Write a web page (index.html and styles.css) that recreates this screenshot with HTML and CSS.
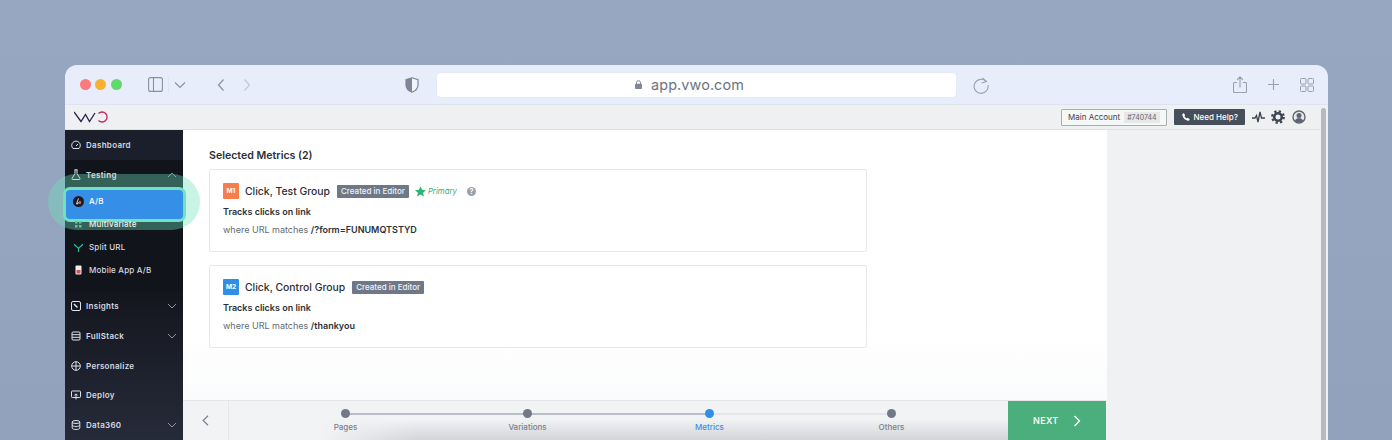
FILE: index.html
```html
<!DOCTYPE html>
<html lang="en">
<head>
<meta charset="utf-8">
<title>VWO metrics</title>
<link rel="stylesheet" href="styles.css">
</head>
<body>
<div class="window">
  <header class="toolbar">
    <div class="lights"><i class="light red"></i><i class="light yellow"></i><i class="light green"></i></div>
    <svg class="tb sidebar-ic" width="15" height="15" viewBox="0 0 15 15" fill="none" stroke="#8a919e" stroke-width="1.1"><rect x=".6" y=".6" width="13.800" height="13.800" rx="2"/><path d="M5.500.6v13.800"/></svg>
    <i class="tb-div"></i>
    <svg class="tb chev-ic" width="12" height="8" viewBox="0 0 12 8" fill="none" stroke="#8a919e" stroke-width="1.1"><path d="M1 1.500 6 6.500l5-5"/></svg>
    <svg class="tb back-ic" width="8" height="12" viewBox="0 0 8 12" fill="none" stroke="#8a919e" stroke-width="1.200"><path d="M6.500.5 1.500 6l5 5.500"/></svg>
    <svg class="tb fwd-ic" width="8" height="12" viewBox="0 0 8 12" fill="none" stroke="#c2c8d4" stroke-width="1.200"><path d="M1.500.5l5 5.500-5 5.500"/></svg>
    <svg class="tb shield-ic" width="14" height="16" viewBox="0 0 14 16"><path d="M7 .8 13 2.600V8c0 3.500-2.500 5.800-6 7.200C3.500 13.800 1 11.500 1 8V2.600z" fill="#f1f4fb" stroke="#7f8794" stroke-width="1.200"/><path d="M7 .8 1 2.600V8c0 3.500 2.500 5.800 6 7.200z" fill="#7f8794"/></svg>
    <div class="address">
      <svg width="7" height="9" viewBox="0 0 7 9"><path d="M1.500 4V2.700a2 2 0 0 1 4 0V4" fill="none" stroke="#7f8794" stroke-width="1"/><rect y="3.700" width="7" height="5.300" rx="1" fill="#7f8794"/></svg>
      <span class="url">app.vwo.com</span>
    </div>
    <svg class="tb reload-ic" width="18" height="18" viewBox="0 0 18 18" fill="none" stroke="#9aa1ad" stroke-width="1.100"><path d="M14.300 5.600A7 7 0 1 0 16 9"/><path d="M10.500 1.800l4 3.800-4.800 1.400"/></svg>
    <svg class="tb share-ic" width="14" height="17" viewBox="0 0 14 17" fill="none" stroke="#9aa1ad" stroke-width="1.100"><path d="M4 6.500H1.500a1 1 0 0 0-1 1V15.500a1 1 0 0 0 1 1h11a1 1 0 0 0 1-1V7.500a1 1 0 0 0-1-1H10M7 11.500V1M4 3.800 7 .8l3 3"/></svg>
    <svg class="tb plus-ic" width="11" height="11" viewBox="0 0 11 11" fill="none" stroke="#9aa1ad" stroke-width="1.100"><path d="M5.500 0v11M0 5.500h11"/></svg>
    <svg class="tb tabs-ic" width="14" height="14" viewBox="0 0 14 14" fill="none" stroke="#9aa1ad" stroke-width="1"><rect x=".5" y=".5" width="5.500" height="5.500" rx="1"/><rect x="8" y=".5" width="5.500" height="5.500" rx="1"/><rect x=".5" y="8" width="5.500" height="5.500" rx="1"/><rect x="8" y="8" width="5.500" height="5.500" rx="1"/></svg>
  </header>

  <div class="appbar">
    <svg class="logo" width="34" height="12" viewBox="0 0 34 12" fill="none" stroke-width="1.300"><path d="M0 1 7 10.500l4.500-7 4 7L21 2" stroke="#25204f"/><path d="M24.500 2.500A5 5 0 1 1 24.500 9.500" stroke="#c8245f"/></svg>
    <div class="account"><span>Main Account</span><span class="acc-id">#740744</span></div>
    <div class="help">
      <svg width="8" height="8" viewBox="0 0 8 8"><path d="M1.800.3 3.200 2.300 2.400 3.300c.5 1 1.300 1.800 2.300 2.300l1-.8L7.700 6.200C7.400 7.300 6.700 7.800 6 7.700 3 7.300.7 5 .3 2 .2 1.300.7.600 1.800.3z" fill="#fff"/></svg>
      <span>Need Help?</span>
    </div>
    <svg class="ab-ic pulse" width="13" height="12" viewBox="0 0 13 12" fill="none" stroke="#3d4550" stroke-width="1.300"><path d="M0 7h3l1.500-2.500L6 11l2-10 1.500 6H13"/></svg>
    <svg class="ab-ic gear" width="14" height="14" viewBox="0 0 14 14" fill="none" stroke="#3d4550"><circle cx="7" cy="7" r="3.800" stroke-width="2.600"/><circle cx="7" cy="7" r="5.800" stroke-width="2.200" stroke-dasharray="2.280 2.280"/></svg>
    <svg class="ab-ic user" width="14" height="14" viewBox="0 0 14 14"><circle cx="7" cy="7" r="6" fill="#e8eaec" stroke="#5d6570" stroke-width="1.400"/><circle cx="7" cy="5.500" r="2.500" fill="#5d6570"/><path d="M2.800 11c.8-2 2.400-3 4.200-3s3.400 1 4.200 3A6 6 0 0 1 2.800 11z" fill="#5d6570"/></svg>
  </div>

  <div class="workspace">
    <nav class="sidebar">
      <a class="nav-row top"><svg class="nav-ic" width="10" height="10" viewBox="0 0 10 10" fill="none" stroke="#dfe3ea"><path d="M2 8.500a4.300 4.300 0 1 1 6 0z"/><path d="M5 6l2-2"/></svg><span>Dashboard</span></a>
      <div class="testing">
        <a class="nav-row"><svg class="nav-ic" width="10" height="11" viewBox="0 0 10 11" fill="none" stroke="#dfe3ea"><path d="M3.500.8h3M4 1v3.500L1 9.500c-.3.500 0 1 .5 1h7c.5 0 .8-.5.5-1L6 4.500V1"/></svg><span>Testing</span><svg class="caret" width="10" height="6" viewBox="0 0 10 6" fill="none" stroke="#8a92a3"><path d="M1 5l4-4 4 4"/></svg></a>
        <a class="sub-row ab-row"><span class="ab-badge"><svg width="11" height="11" viewBox="0 0 11 11"><circle cx="5.500" cy="5.500" r="5.500" fill="#1b1d26"/><path d="M5.500 2.500 3.500 8h1l.4-1.200h1.600" fill="none" stroke="#fff" stroke-width=".8"/><rect x="6" y="5" width="2" height="3" fill="#d9504f"/></svg></span><span>A/B</span></a>
        <a class="sub-row lit"><span class="sub-ic"><svg width="7" height="7" viewBox="0 0 7 7" fill="#5ec4a0"><rect width="2.500" height="2.500"/><rect x="4" width="2.500" height="2.500"/><rect y="4" width="2.500" height="2.500"/><rect x="4" y="4" width="2.500" height="2.500"/></svg></span><span>Multivariate</span></a>
        <a class="sub-row"><span class="sub-ic"><svg width="9" height="9" viewBox="0 0 9 9" fill="none" stroke="#2fbf9b" stroke-width="1.200"><path d="M.5 1c0 2.500 4 2.500 4 5v3M8.500 1c0 2.500-4 2.500-4 5"/></svg></span><span>Split URL</span></a>
        <a class="sub-row"><span class="sub-ic"><svg width="7" height="10" viewBox="0 0 7 10"><rect x=".5" y=".5" width="6" height="9" rx="1" fill="#eceef2"/><rect x="1.500" y="5" width="4" height="3.500" fill="#d9504f"/></svg></span><span>Mobile App A/B</span></a>
      </div>
      <div class="rest">
        <a class="nav-row"><svg class="nav-ic" width="10" height="10" viewBox="0 0 10 10" fill="none" stroke="#dfe3ea"><rect x=".5" y=".5" width="9" height="9" rx="1.500"/><path d="M3 3l3.500 3.500" stroke-width="1.500"/></svg><span>Insights</span><svg class="caret" width="10" height="6" viewBox="0 0 10 6" fill="none" stroke="#8a92a3"><path d="M1 1l4 4 4-4"/></svg></a>
        <a class="nav-row"><svg class="nav-ic" width="10" height="10" viewBox="0 0 10 10" fill="none" stroke="#dfe3ea"><rect x="1" y="1" width="8" height="8" rx="1"/><path d="M1 3.700h8M1 6.300h8"/></svg><span>FullStack</span><svg class="caret" width="10" height="6" viewBox="0 0 10 6" fill="none" stroke="#8a92a3"><path d="M1 1l4 4 4-4"/></svg></a>
        <a class="nav-row"><svg class="nav-ic" width="10" height="10" viewBox="0 0 10 10" fill="none" stroke="#dfe3ea"><circle cx="5" cy="5" r="4.300"/><path d="M5 .7v8.600M.7 5h8.600"/></svg><span>Personalize</span></a>
        <a class="nav-row"><svg class="nav-ic" width="10" height="10" viewBox="0 0 10 10" fill="none" stroke="#dfe3ea"><rect x=".5" y="1" width="9" height="6.500" rx=".8"/><path d="M5 9.500V4M3.300 5.500 5 3.800l1.700 1.700"/></svg><span>Deploy</span></a>
        <a class="nav-row"><svg class="nav-ic" width="10" height="10" viewBox="0 0 10 10" fill="none" stroke="#dfe3ea"><ellipse cx="5" cy="2" rx="3.800" ry="1.500"/><path d="M1.200 2v6c0 .8 1.700 1.500 3.800 1.500S8.800 8.800 8.800 8V2M1.200 5c0 .8 1.700 1.500 3.800 1.500S8.800 5.800 8.800 5"/></svg><span>Data360</span><svg class="caret" width="10" height="6" viewBox="0 0 10 6" fill="none" stroke="#8a92a3"><path d="M1 1l4 4 4-4"/></svg></a>
      </div>
    </nav>

    <main class="main">
      <section class="content">
        <h2 class="title">Selected Metrics (2)</h2>
        <article class="card">
          <div class="card-head">
            <span class="tag orange">M1</span>
            <span class="metric">Click, Test Group</span>
            <span class="pill">Created in Editor</span>
            <svg class="star" width="11" height="11" viewBox="0 0 11 11"><path d="M5.500.3 7.100 3.800l3.800.4-2.800 2.600.8 3.800-3.400-2-3.400 2 .8-3.800L0 4.200l3.900-.4z" fill="#2bb673"/></svg>
            <em class="primary">Primary</em>
            <span class="q">?</span>
          </div>
          <p class="tracks">Tracks clicks on link</p>
          <p class="where">where URL matches <b>/?form=FUNUMQTSTYD</b></p>
        </article>
        <article class="card">
          <div class="card-head">
            <span class="tag blue">M2</span>
            <span class="metric">Click, Control Group</span>
            <span class="pill">Created in Editor</span>
          </div>
          <p class="tracks">Tracks clicks on link</p>
          <p class="where">where URL matches <b>/thankyou</b></p>
        </article>
      </section>
      <footer class="footer">
        <div class="back"><svg width="7" height="11" viewBox="0 0 7 11" fill="none" stroke="#7b828e" stroke-width="1.200"><path d="M6 .8 1.200 5.500 6 10.200"/></svg></div>
        <ol class="steps">
          <li class="step done"><i class="dot"></i><span>Pages</span></li>
          <li class="step done"><i class="dot"></i><span>Variations</span></li>
          <li class="step current"><i class="dot"></i><span>Metrics</span></li>
          <li class="step"><i class="dot"></i><span>Others</span></li>
        </ol>
        <div class="next"><span>NEXT</span><svg width="8" height="12" viewBox="0 0 8 12" fill="none" stroke="#fff" stroke-width="1.300"><path d="M1.500 1 6.500 6l-5 5"/></svg></div>
      </footer>
    </main>
    <aside class="panel"></aside>
    <div class="scrollbar"><i class="thumb"></i></div>
  </div>
  <div class="halo"></div>
</div>
</body>
</html>
```
FILE: styles.css
```css
* { box-sizing: border-box; }
html, body { margin: 0; height: 100%; }
body {
  width: 1392px;
  height: 440px;
  overflow: hidden;
  padding: 65px 64px 0 65px;
  background: linear-gradient(180deg, #98a7c1 0%, #93a2bc 100%);
  font-family: Inter, "Liberation Sans", sans-serif;
  color: #2b2f36;
}
p, h2, ol { margin: 0; padding: 0; }
svg { display: block; flex: none; }
i { display: block; }

.window {
  position: relative;
  width: 1263px;
  height: 375px;
  border-radius: 12px 12px 0 0;
  display: flex;
  flex-direction: column;
}

/* Browser toolbar */
.toolbar {
  height: 40px;
  flex: none;
  display: flex;
  align-items: center;
  background: #e7edfa;
  border-radius: 12px 12px 0 0;
  border-bottom: 1px solid #dde3ef;
  padding-left: 14.500px;
}
.lights { display: flex; gap: 4.500px; }
.light { width: 11px; height: 11px; border-radius: 50%; }
.red { background: #fb7b7c; }
.yellow { background: #fbb12f; }
.green { background: #62d96b; }
.sidebar-ic { margin-left: 26px; }
.tb-div { width: 1px; height: 16px; background: #dfe5f1; margin-left: 5px; }
.chev-ic { margin-left: 5px; }
.back-ic { margin-left: 31px; }
.fwd-ic { margin-left: 18px; }
.shield-ic { margin-left: 154px; }
.address {
  width: 519px;
  height: 24px;
  margin-left: 18px;
  background: #fff;
  border-radius: 4px;
  display: flex;
  align-items: center;
  justify-content: center;
  gap: 9px;
  padding-right: 13px;
  box-shadow: 0 0 0 .5px #e1e6f1;
}
.url { font-size: 14.400px; color: #6d7480; letter-spacing: .1px; }
.reload-ic { margin-left: 16.500px; }
.share-ic { margin-left: 243px; }
.plus-ic { margin-left: 20.500px; }
.tabs-ic { margin-left: 21px; }

/* App bar */
.appbar {
  height: 25px;
  flex: none;
  display: flex;
  align-items: center;
  background: #eff0f1;
  border-bottom: 1px solid #dfe1e3;
  padding-left: 9px;
}
.account {
  margin-left: 953px;
  width: 106px;
  height: 17px;
  border: 1px solid #a9aeb5;
  border-radius: 1px;
  background: #f6f7f7;
  display: flex;
  align-items: center;
  gap: 4px;
  padding-left: 6px;
  font-size: 8px;
  color: #3a414b;
}
.acc-id {
  background: #e6e8ea;
  font-size: 7px;
  padding: 1px 3px;
  color: #5e6570;
}
.help {
  margin-left: 7px;
  width: 71px;
  height: 16px;
  background: #454e5a;
  border-radius: 1px;
  color: #fff;
  font-size: 8px;
  font-weight: 500;
  display: flex;
  align-items: center;
  gap: 3.500px;
  padding-left: 8px;
}
.pulse { margin-left: 7px; }
.gear { margin-left: 6px; }
.user { margin-left: 7px; }

/* Workspace */
.workspace {
  flex: 1;
  min-height: 0;
  display: flex;
}
.sidebar {
  width: 118px;
  flex: none;
  background: #1b1f2b;
  display: flex;
  flex-direction: column;
}
.nav-row {
  height: 29.750px;
  flex: none;
  display: flex;
  align-items: center;
  padding-left: 6px;
  gap: 5px;
  color: #d5d9e0;
  font-size: 8px;
  font-weight: 600;
  letter-spacing: .3px;
}
.nav-row span, .sub-row span { position: relative; z-index: 3; }
.nav-ic { width: 10px; }
.caret { margin-left: auto; margin-right: 6px; }
.testing {
  background: #12141b;
  padding-bottom: 9.800px;
}
.sub-row {
  height: 23px;
  display: flex;
  align-items: center;
  padding-left: 8px;
  gap: 5px;
  color: #d5d9e0;
  font-size: 8px;
  font-weight: 500;
  letter-spacing: .2px;
}
.sub-row.lit { color: #eef1f4; }
.sub-ic, .ab-badge {
  width: 11px;
  display: flex;
  justify-content: center;
}
.rest {
  flex: 1;
  background: linear-gradient(180deg, #14161e 0%, #262b3a 100%);
}
.ab-row {
  position: relative;
  z-index: 3;
  color: #fff;
}

/* Highlight over A/B */
.halo {
  position: absolute;
  left: -17px;
  top: 109px;
  width: 152px;
  height: 56px;
  border-radius: 28px;
  background: rgba(110, 225, 190, .38);
  z-index: 2;
  pointer-events: none;
}
.ab-row::before {
  content: "";
  position: absolute;
  left: -2px;
  right: -3px;
  top: 1px;
  bottom: -1px;
  height: 29px;
  transform: translateY(-4px);
  background: #368fe6;
  border: 3px solid #6fe2c3;
  border-radius: 7px;
  z-index: -1;
}

/* Main */
.main {
  width: 924px;
  flex: none;
  display: flex;
  flex-direction: column;
  background: #fff;
}
.content {
  flex: 1;
  min-height: 0;
  padding: 19px 26px 0;
  background: linear-gradient(180deg, #fff 75%, #fafbfc 100%);
}
.title {
  font-size: 10.600px;
  font-weight: 600;
  line-height: 13px;
  color: #2b2f36;
  margin-bottom: 7px;
}
.card {
  width: 658px;
  height: 83px;
  background: #fff;
  border: 1px solid #e6e8ea;
  border-radius: 2px;
  padding: 13px 13px 0;
  margin-bottom: 13px;
}
.card-head { display: flex; align-items: center; height: 16px; }
.tag {
  width: 16px;
  height: 16px;
  border-radius: 1px;
  color: #fff;
  font-size: 6.500px;
  font-weight: 700;
  display: flex;
  align-items: center;
  justify-content: center;
}
.orange { background: #f77d4d; }
.blue { background: #2f8fe6; }
.metric { font-size: 10.400px; font-weight: 500; margin-left: 6px; color: #2b2f36; }
.pill {
  margin-left: 7px;
  background: #6f7888;
  color: #f2f3f5;
  font-size: 8px;
  font-weight: 500;
  padding: 0 4px;
  height: 13px;
  line-height: 13px;
  border-radius: 1px;
}
.star { margin-left: 6px; }
.primary { margin-left: 2px; font-size: 7.800px; color: #3cab74; }
.q {
  margin-left: 10px;
  width: 9px;
  height: 9px;
  border-radius: 50%;
  background: #9aa1ad;
  color: #fff;
  font-size: 7px;
  font-weight: 700;
  line-height: 9px;
  text-align: center;
}
.tracks { font-size: 9px; font-weight: 600; line-height: 12px; margin-top: 7px; color: #2b2f36; }
.where { font-size: 9px; line-height: 12px; margin-top: 6px; color: #636a76; }
.where b { font-weight: 600; color: #2b2f36; }

/* Footer */
.footer {
  height: 40px;
  flex: none;
  display: flex;
  background: #f2f3f5;
  border-top: 1px solid #e3e5e8;
  padding-right: 1px;
}
.back {
  width: 46px;
  border-right: 1px solid #e6e7ea;
  display: flex;
  align-items: center;
  justify-content: center;
}
.steps {
  flex: 1;
  list-style: none;
  display: flex;
  padding: 0 25.500px 0 25.500px;
  background:
    linear-gradient(90deg, #f2f3f5 90px, rgba(242, 243, 245, 0) 190px),
    linear-gradient(180deg, rgba(210, 212, 216, 0) 45%, #d2d4d8 100%);
}
.step {
  flex: 1;
  position: relative;
  display: flex;
  flex-direction: column;
  align-items: center;
  padding-top: 8px;
  gap: 4px;
  font-size: 8px;
  font-weight: 500;
  color: #7a818d;
}
.step::after {
  content: "";
  position: absolute;
  top: 11.500px;
  left: 50%;
  width: 100%;
  height: 2px;
  background: #e4e6e9;
}
.step.done::after { background: #b9bdc5; }
.step:last-child::after { display: none; }
.dot {
  position: relative;
  z-index: 1;
  width: 9px;
  height: 9px;
  border-radius: 50%;
  background: #717986;
}
.step.current { color: #3d90e3; }
.current .dot { background: #2f8fe6; }
.next {
  width: 98px;
  background: #4bae7d;
  color: #f4fbf7;
  font-size: 9px;
  font-weight: 600;
  letter-spacing: .3px;
  display: flex;
  align-items: center;
  padding-left: 25px;
  gap: 14px;
}

/* Right panel */
.panel { flex: 1; background: #f0f1f2; }
.scrollbar {
  width: 8px;
  flex: none;
  background: #eff0f1;
  margin-top: -25px;
  padding: 3px 1px 0 1px;
  position: relative;
}
.thumb { height: 100%; width: 5px; background: #b6b9bd; border-radius: 3px 3px 0 0; }
```
